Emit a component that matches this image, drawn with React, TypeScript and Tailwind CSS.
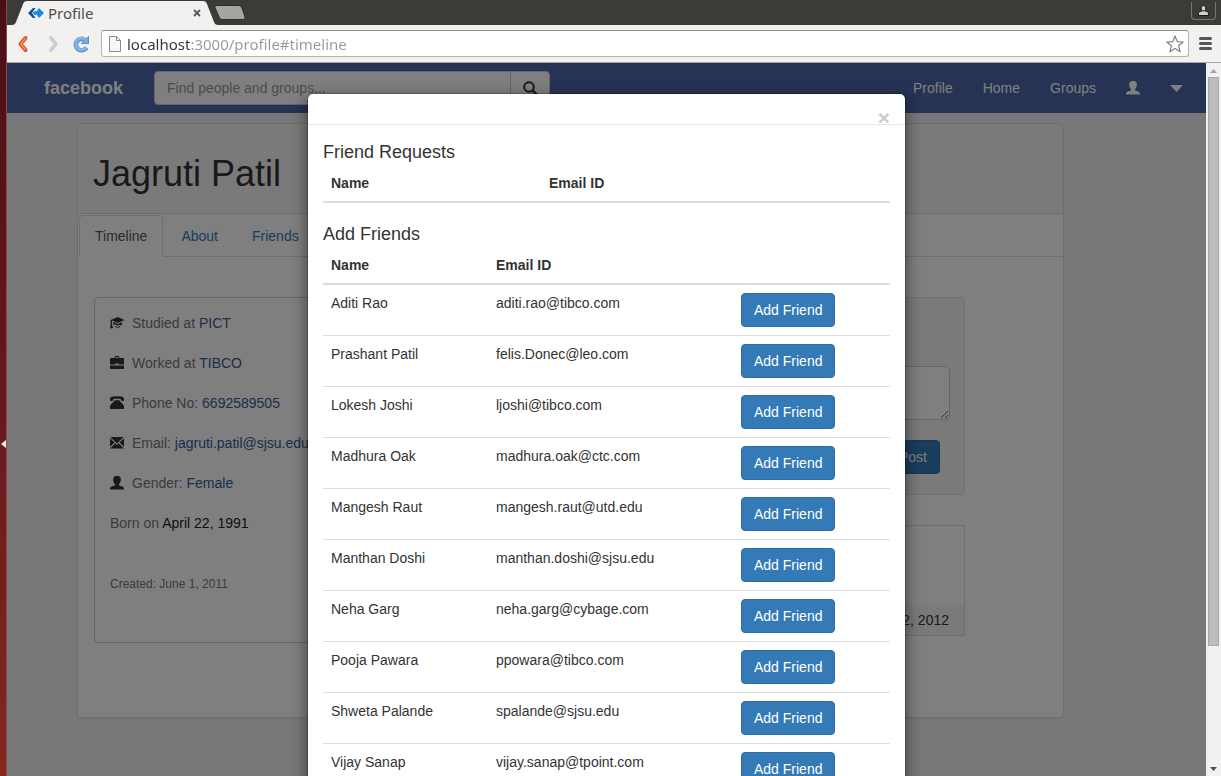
import type { ReactNode } from "react";

const people = [
  ["Aditi Rao", "aditi.rao@tibco.com"],
  ["Prashant Patil", "felis.Donec@leo.com"],
  ["Lokesh Joshi", "ljoshi@tibco.com"],
  ["Madhura Oak", "madhura.oak@ctc.com"],
  ["Mangesh Raut", "mangesh.raut@utd.edu"],
  ["Manthan Doshi", "manthan.doshi@sjsu.edu"],
  ["Neha Garg", "neha.garg@cybage.com"],
  ["Pooja Pawara", "ppowara@tibco.com"],
  ["Shweta Palande", "spalande@sjsu.edu"],
  ["Vijay Sanap", "vijay.sanap@tpoint.com"],
];

function Glyph({ children }: { children: ReactNode }) {
  return (
    <svg viewBox="0 0 14 14" className="h-[14px] w-[14px] shrink-0" fill="currentColor" aria-hidden="true">
      {children}
    </svg>
  );
}

const UserGlyph = () => (
  <Glyph>
    <path d="M0 13.500V12.500C0 11.300 1 10.800 4.600 9.500 5.400 9.200 5.300 8.500 4.800 7.900 3.700 6.600 3.100 5.200 3.100 3.500 3.100 1 4.600-.2 7-.2S10.900 1 10.900 3.500C10.900 5.200 10.300 6.600 9.200 7.900 8.700 8.500 8.600 9.200 9.400 9.500 13 10.800 14 11.300 14 12.500V13.500Z" />
  </Glyph>
);
const GradGlyph = () => (
  <Glyph>
    <path d="M.6 4 7.800 1 14.800 4 7.800 7Z" />
    <path d="M3.200 6 7.800 8 12 6.200V8.700L10.800 9.300 9.200 8.800 7.500 9.700 5.500 8.600 3.200 8.500Z" />
    <path d="M4.500 9.800 7.500 10.900 10.500 9.800 9.500 11.500H6Z" />
    <path d="M.6 4H2V8.500L3.300 12.500 2.200 11.800 1.300 12.600 0 12.300 .7 8.500Z" />
  </Glyph>
);
const CaseGlyph = () => (
  <Glyph>
    <path fillRule="evenodd" d="M4.700 2V.8Q4.700 0 5.500 0h3Q9.300 0 9.300.8V2H13q1 0 1 1V8.500H8.500V7.400h-3V8.500H0V3q0-1 1-1ZM5.700 2h2.600V1H5.700Z" />
    <path d="M0 9.500H14V12q0 1-1 1H1q-1 0-1-1Z" />
  </Glyph>
);
const PhoneGlyph = () => (
  <Glyph>
    <path d="M0 4.200V3Q0 .9 3 .6 7 .1 11 .6 14 .9 14 3V4.200Q14 5 13.300 5L11.500 4.700Q10.800 4.500 10.800 3.900V3Q7 2.300 3.200 3V3.900q0 .6-.7.800L.7 5Q0 5 0 4.200Z" />
    <path d="M4.500 4.300H9.500C10 6 14 8.500 14 10.500V12.600q0 .5-.5.500H.5Q0 13.100 0 12.600V10.500C0 8.500 4 6 4.500 4.300Z" />
  </Glyph>
);
const MailGlyph = () => (
  <Glyph>
    <path d="M.3 1H13.700L7 7.400ZM0 2.300 4.500 6.500 0 10.800ZM14 2.300V10.800L9.500 6.500ZM5.300 7.300 7 9 8.700 7.300 14 12.600H0Z" />
  </Glyph>
);

const facts: [() => ReactNode, string, string][] = [
  [GradGlyph, "Studied at", "PICT"],
  [CaseGlyph, "Worked at", "TIBCO"],
  [PhoneGlyph, "Phone No:", "6692589505"],
  [MailGlyph, "Email:", "jagruti.patil@sjsu.edu"],
  [UserGlyph, "Gender:", "Female"],
];

function BrowserChrome() {
  return (
    <div className="shrink-0 font-['Noto_Sans','Open_Sans',sans-serif]">
      <div className="flex h-[25px] items-end bg-[#3c3b37]">
        <div className="relative flex h-6 w-[211px] items-center pl-[21px] pr-[17px]">
          <svg className="absolute inset-0 h-full w-full" viewBox="0 0 211 24" preserveAspectRatio="none" aria-hidden="true">
            <path d="M0 24H5Q8 24 9 21L16 3Q17 0 20 0H196Q199 0 200 3L207 21Q208 24 211 24Z" fill="#f2f1f0" />
          </svg>
          <svg className="relative h-3 w-4" viewBox="0 0 16 12" aria-hidden="true">
            <path d="M0 6 5 1H7.500L4 6 7.500 11H5Z" fill="#0f4f96" />
            <path d="M4.500 6 7 3.800 8.500 4.500 11 1 16 6 11 11 8.500 7.500 7 8.200Z" fill="#1a8ae6" />
          </svg>
          <span className="relative ml-1 text-[15px] leading-6 text-[#4c4c4c]">Profile</span>
          <button aria-label="Close tab" className="relative ml-auto">
            <svg className="h-2 w-2" viewBox="0 0 8 8" aria-hidden="true">
              <path d="M1 1 7 7M7 1 1 7" stroke="#555" strokeWidth="1.800" />
            </svg>
          </button>
        </div>
        <button aria-label="New tab" className="mb-[5px] -ml-1">
          <svg className="h-[15px] w-8" viewBox="0 0 32 15" aria-hidden="true">
            <path d="M3 .5H25Q27 .5 28 3L31 12Q31.500 14.500 29 14.500H8Q6 14.500 5 12L1 2.500Q.5 .5 3 .5Z" fill="#a5a5a3" stroke="#2e2d2a" />
          </svg>
        </button>
        <button aria-label="Account" className="mb-[5px] ml-auto mr-[5px] flex h-[18px] w-[25px] items-center justify-center rounded-b border border-t-0 border-[#77756f]">
          <svg className="h-[11px] w-[11px]" viewBox="0 0 11 11" aria-hidden="true">
            <path d="M.5 10.500V8Q.5 6.500 3.200 6.200V2Q5.500-1 7.800 2V6.200Q10.500 6.500 10.500 8V10.500Z" fill="#d0cecb" stroke="#1e1d1b" />
            <path d="M3 5.800H8" stroke="#1e1d1b" />
          </svg>
        </button>
      </div>
      <div className="flex h-[38px] items-center border-b border-[#a9a8a6] bg-[#f2f1f0] pl-[10px] pr-[9px]">
        <button aria-label="Back">
          <svg className="h-[18px] w-3" viewBox="0 0 12 18" aria-hidden="true">
            <path d="M8.500 3 3.500 9 8.500 15" fill="none" stroke="#d2562a" strokeWidth="4" strokeLinecap="round" strokeLinejoin="round" />
            <path d="M8.500 3 4 9 8.500 15" fill="none" stroke="#f2894d" strokeWidth="1.800" />
          </svg>
        </button>
        <button aria-label="Forward" className="ml-[19px]">
          <svg className="h-[18px] w-3" viewBox="0 0 12 18" aria-hidden="true">
            <path d="M3 3 8 9 3 15" fill="none" stroke="#cfcdcb" strokeWidth="3.600" strokeLinecap="round" strokeLinejoin="round" />
          </svg>
        </button>
        <button aria-label="Reload" className="ml-3">
          <svg className="h-[18px] w-[18px]" viewBox="0 0 18 18" aria-hidden="true">
            <path d="M13 5A5.700 5.700 0 1 0 14.500 12.500" fill="none" stroke="#5a90c8" strokeWidth="4.600" />
            <path d="M16.500 1.500V8.500H9.500Z" fill="#78aee0" stroke="#5a90c8" />
            <path d="M13.500 5A5.700 5.700 0 1 0 14.200 12.300" fill="none" stroke="#83b3e0" strokeWidth="3" />
          </svg>
        </button>
        <div className="ml-[11px] flex h-[27px] flex-1 items-center rounded-[3px] border border-[#b5b4b2] border-t-[#8f8e8c] bg-white pl-[7px] pr-1">
          <svg className="h-4 w-3" viewBox="0 0 12 16" aria-hidden="true">
            <path d="M.5 .5H7.500L11.500 4.500V15.500H.5ZM7.500 .5V4.500H11.500" fill="#f7f7f7" stroke="#8a8a8a" />
          </svg>
          <input
            aria-label="Address"
            defaultValue="localhost:3000/profile#timeline"
            className="ml-[6px] min-w-0 flex-1 bg-[linear-gradient(90deg,#333_63px,#999_63px)] bg-clip-text text-[15px] leading-6 text-transparent outline-none"
          />
          <button aria-label="Bookmark">
            <svg className="h-[18px] w-[18px]" viewBox="0 0 18 18" aria-hidden="true">
              <path d="M9 1 11.200 6.600 17.200 7 12.600 10.800 14.200 16.800 9 13.500 3.800 16.800 5.400 10.800.8 7 6.800 6.600Z" fill="#fff" stroke="#808080" strokeWidth="1.200" strokeLinejoin="round" />
            </svg>
          </button>
        </div>
        <button aria-label="Menu" className="ml-[10px]">
          <svg className="h-[13px] w-[13px]" viewBox="0 0 13 13" aria-hidden="true">
            <path d="M1.500 1.500H11.500M1.500 6.500H11.500M1.500 11.500H11.500" stroke="#555" strokeWidth="3" strokeLinecap="round" />
          </svg>
        </button>
      </div>
    </div>
  );
}

function Navbar() {
  return (
    <header className="flex h-[50px] items-center bg-[#4c66a8] pl-[37px] pr-[23px] text-white">
      <a href="#home" className="text-lg font-bold leading-5">facebook</a>
      <form className="ml-[31px] flex h-[34px] w-[396px]">
        <input
          aria-label="Search"
          placeholder="Find people and groups..."
          className="min-w-0 flex-1 rounded-l border border-[#ccc] bg-white px-3 text-sm leading-5 text-[#555] placeholder:text-[#999]"
        />
        <button type="button" aria-label="Submit search" className="-ml-px flex w-10 items-center justify-center rounded-r border border-[#ccc] bg-white text-[#333]">
          <svg className="h-[15px] w-[15px]" viewBox="0 0 15 15" aria-hidden="true">
            <circle cx="6" cy="6" r="4.800" fill="none" stroke="currentColor" strokeWidth="2" />
            <path d="M9.500 9.500 14 14" stroke="currentColor" strokeWidth="2.600" />
          </svg>
        </button>
      </form>
      <nav className="ml-auto flex items-center gap-[30px] text-sm leading-5">
        <a href="#profile">Profile</a>
        <a href="#home">Home</a>
        <a href="#groups">Groups</a>
        <a href="#account" aria-label="Account"><UserGlyph /></a>
        <a href="#more" aria-label="More">
          <svg className="h-[7px] w-[13px]" viewBox="0 0 13 7" fill="currentColor" aria-hidden="true"><path d="M0 0H13L6.500 7Z" /></svg>
        </a>
      </nav>
    </header>
  );
}

function ProfileCard() {
  return (
    <main className="ml-[70px] mr-[142px] mt-[10px] overflow-hidden rounded border border-[#ddd] bg-white shadow-[0_1px_1px_rgba(0,0,0,0.05)]">
      <div className="border-b border-[#ddd] bg-[#f5f5f5] px-[15px] pb-[19px] pt-[30px]">
        <h1 className="text-4xl leading-10 text-[#333]">Jagruti Patil</h1>
      </div>
      <nav className="mt-px flex border-b border-[#ddd] px-px text-sm leading-5 text-[#337ab7]">
        <a href="#timeline" className="-mb-px rounded-t border border-b-white border-[#ddd] bg-white px-[15px] py-[10px] text-[#555]">Timeline</a>
        <a href="#about" className="ml-[2px] px-4 py-[11px] pb-[9px]">About</a>
        <a href="#friends" className="ml-[2px] px-4 py-[11px] pb-[9px]">Friends</a>
      </nav>
      <div className="flex items-start gap-[30px] pb-[74px] pl-4 pr-[98px] pt-10">
        <section className="flex h-[346px] w-[270px] flex-col gap-5 rounded border border-[#ccc] p-[15px] text-sm leading-5 text-[#777]">
          {facts.map(([Icon, label, value]) => (
            <p key={label} className="flex items-center gap-2 whitespace-nowrap">
              <span className="text-[#333]"><Icon /></span>
              <span>{label} <a href="#info" className="text-[#3b5998]">{value}</a></span>
            </p>
          ))}
          <p>Born on <span className="text-[#222]">April 22, 1991</span></p>
          <p className="mt-5 text-xs leading-[22px]">Created: June 1, 2011</p>
        </section>
        <div className="flex-1">
          <form className="flex flex-col rounded border border-[#e3e3e3] bg-[#f5f5f5] px-[14px] pb-5 pt-[68px]">
            <textarea aria-label="Status" className="h-[54px] rounded border border-[#ccc] bg-white" />
            <button type="button" className="mr-[10px] mt-5 h-[34px] self-end rounded border border-[#2e6da4] bg-[#337ab7] px-3 text-sm leading-5 text-white">Post</button>
          </form>
          <article className="mt-[30px] border border-[#ddd] pt-[79px]">
            <p className="bg-[#f5f5f5] px-[15px] py-1 text-right text-sm leading-[22px] text-[#333]">June 2, 2012</p>
          </article>
        </div>
      </div>
    </main>
  );
}

function FriendsDialog() {
  return (
    <div role="dialog" aria-label="Friends" className="mx-auto mt-[30px] h-[900px] w-full max-w-[599px] rounded-md border border-black/20 bg-white bg-clip-padding text-sm leading-5 text-[#333] shadow-[0_5px_15px_rgba(0,0,0,0.5)]">
      <div className="flex h-[31px] justify-end border-b border-[#e5e5e5] px-[15px] pt-[13px]">
        <button aria-label="Close" className="text-[21px] font-bold leading-[21px] text-[#ccc]">×</button>
      </div>
      <div className="px-[15px] pt-[15px]">
        <h4 className="pb-px text-lg leading-6">Friend Requests</h4>
        <table className="w-full table-fixed text-left">
          <thead>
            <tr className="border-b-2 border-[#ddd]">
              <th className="w-[218px] p-2">Name</th>
              <th className="p-2">Email ID</th>
            </tr>
          </thead>
        </table>
        <h4 className="mt-[19px] pb-px text-lg leading-6">Add Friends</h4>
        <table className="w-full table-fixed text-left">
          <thead>
            <tr className="border-b-2 border-[#ddd]">
              <th className="w-[165px] p-2">Name</th>
              <th className="w-[245px] p-2">Email ID</th>
              <th className="p-2" aria-label="Action" />
            </tr>
          </thead>
          <tbody>
            {people.map(([name, email]) => (
              <tr key={name} className="border-b border-[#ddd]">
                <td className="p-2 align-top">{name}</td>
                <td className="p-2 align-top">{email}</td>
                <td className="p-2">
                  <button className="block h-[34px] rounded border border-[#2e6da4] bg-[#337ab7] px-3 text-white">Add Friend</button>
                </td>
              </tr>
            ))}
          </tbody>
        </table>
      </div>
    </div>
  );
}

export default function App() {
  return (
    <div className="flex h-screen overflow-hidden font-['Liberation_Sans',Arial,sans-serif]">
      <div className="flex w-[7px] shrink-0 items-center justify-end border-r border-[#8a4a4a] bg-linear-to-b from-[#4a0f15] via-[#66171c] to-[#84281f]">
        <svg className="mt-[112px] h-2 w-[5px]" viewBox="0 0 5 8" aria-hidden="true"><path d="M5 0V8L0 4Z" fill="#eee" /></svg>
      </div>
      <div className="flex min-w-0 flex-1 flex-col">
        <BrowserChrome />
        <div className="flex min-h-0 flex-1">
          <div className="relative min-w-0 flex-1 overflow-hidden bg-[#f0f0f3]">
            <Navbar />
            <ProfileCard />
            <div className="absolute inset-0 overflow-hidden bg-black/50">
              <FriendsDialog />
            </div>
          </div>
          <div className="flex w-[15px] shrink-0 flex-col items-center bg-[#f1f1f1] px-[2px] pb-[5px] pt-[6px]">
            <svg className="h-1 w-[7px]" viewBox="0 0 7 4" aria-hidden="true"><path d="M0 4 3.500 0 7 4Z" fill="#a3a3a3" /></svg>
            <div className="mt-1 h-[81%] w-full border border-[#a8a8a8] bg-[#bcbcbc]" />
            <svg className="mt-auto h-1 w-[7px]" viewBox="0 0 7 4" aria-hidden="true"><path d="M0 0H7L3.500 4Z" fill="#505050" /></svg>
          </div>
        </div>
      </div>
    </div>
  );
}
